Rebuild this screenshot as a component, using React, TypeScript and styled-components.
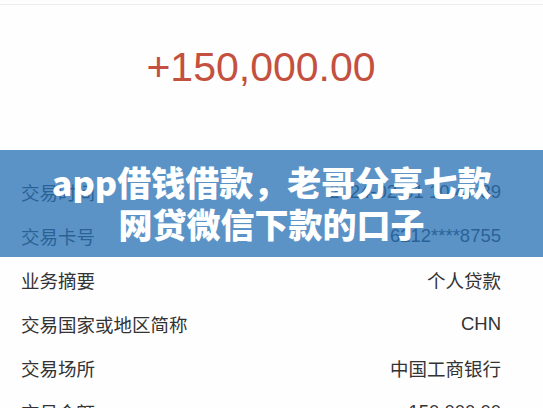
import styled, { createGlobalStyle } from 'styled-components';

const GlobalStyle = createGlobalStyle`
  html, body {
    margin: 0;
    padding: 0;
    background: #fefefe;
  }
  body {
    font-family: "Liberation Sans", "Noto Sans CJK SC", sans-serif;
    color: #333;
  }
`;

const rows = [
  { label: '交易时间', value: '2024-02-01 10:47:39' },
  { label: '交易卡号', value: '6212****8755' },
  { label: '业务摘要', value: '个人贷款' },
  { label: '交易国家或地区简称', value: 'CHN' },
  { label: '交易场所', value: '中国工商银行' },
  { label: '交易金额', value: '150,000.00' },
];

export default function App() {
  return (
    <>
      <GlobalStyle />
      <Page>
        <Hero>
          <Amount>+150,000.00</Amount>
        </Hero>
        <DetailList>
          {rows.map(row => (
            <Row key={row.label}>
              <Label>{row.label}</Label>
              <Value>{row.value}</Value>
            </Row>
          ))}
        </DetailList>
        <Banner>
          <BannerLine>app借钱借款，老哥分享七款</BannerLine>
          <BannerLine>网贷微信下款的口子</BannerLine>
        </Banner>
      </Page>
    </>
  );
}

const Page = styled.main`
  position: relative;
  box-sizing: border-box;
  width: 543px;
  height: 408px;
  padding: 4px 42px 0 21px;
  overflow: hidden;
  background: #fefefe;
`;

const Hero = styled.section`
  box-sizing: border-box;
  height: 166px;
  margin: 0 -42px 0 -21px;
  padding: 38px 42px 0 21px;
  border-top: 1px solid #ededed;
  display: flex;
  justify-content: center;
`;

const Amount = styled.div`
  font-family: "Liberation Sans", sans-serif;
  font-size: 41px;
  line-height: 48px;
  color: #c4503f;
`;

const DetailList = styled.ul`
  margin: 0;
  padding: 0;
  list-style: none;
`;

const Row = styled.li`
  height: 44px;
  display: flex;
  align-items: center;
  justify-content: space-between;
  font-size: 18.5px;
  color: #333;
`;

const Label = styled.span``;

const Value = styled.span``;

const Banner = styled.div`
  position: absolute;
  left: 0;
  right: 0;
  top: 150px;
  height: 107px;
  padding-bottom: 2px;
  box-sizing: border-box;
  background: rgba(39, 113, 181, 0.76);
  display: flex;
  flex-direction: column;
  align-items: center;
  justify-content: center;
`;

const BannerLine = styled.div`
  font-family: "Noto Sans CJK SC", sans-serif;
  font-weight: 900;
  font-size: 34px;
  line-height: 42px;
  color: #fff;
  white-space: nowrap;
`;
